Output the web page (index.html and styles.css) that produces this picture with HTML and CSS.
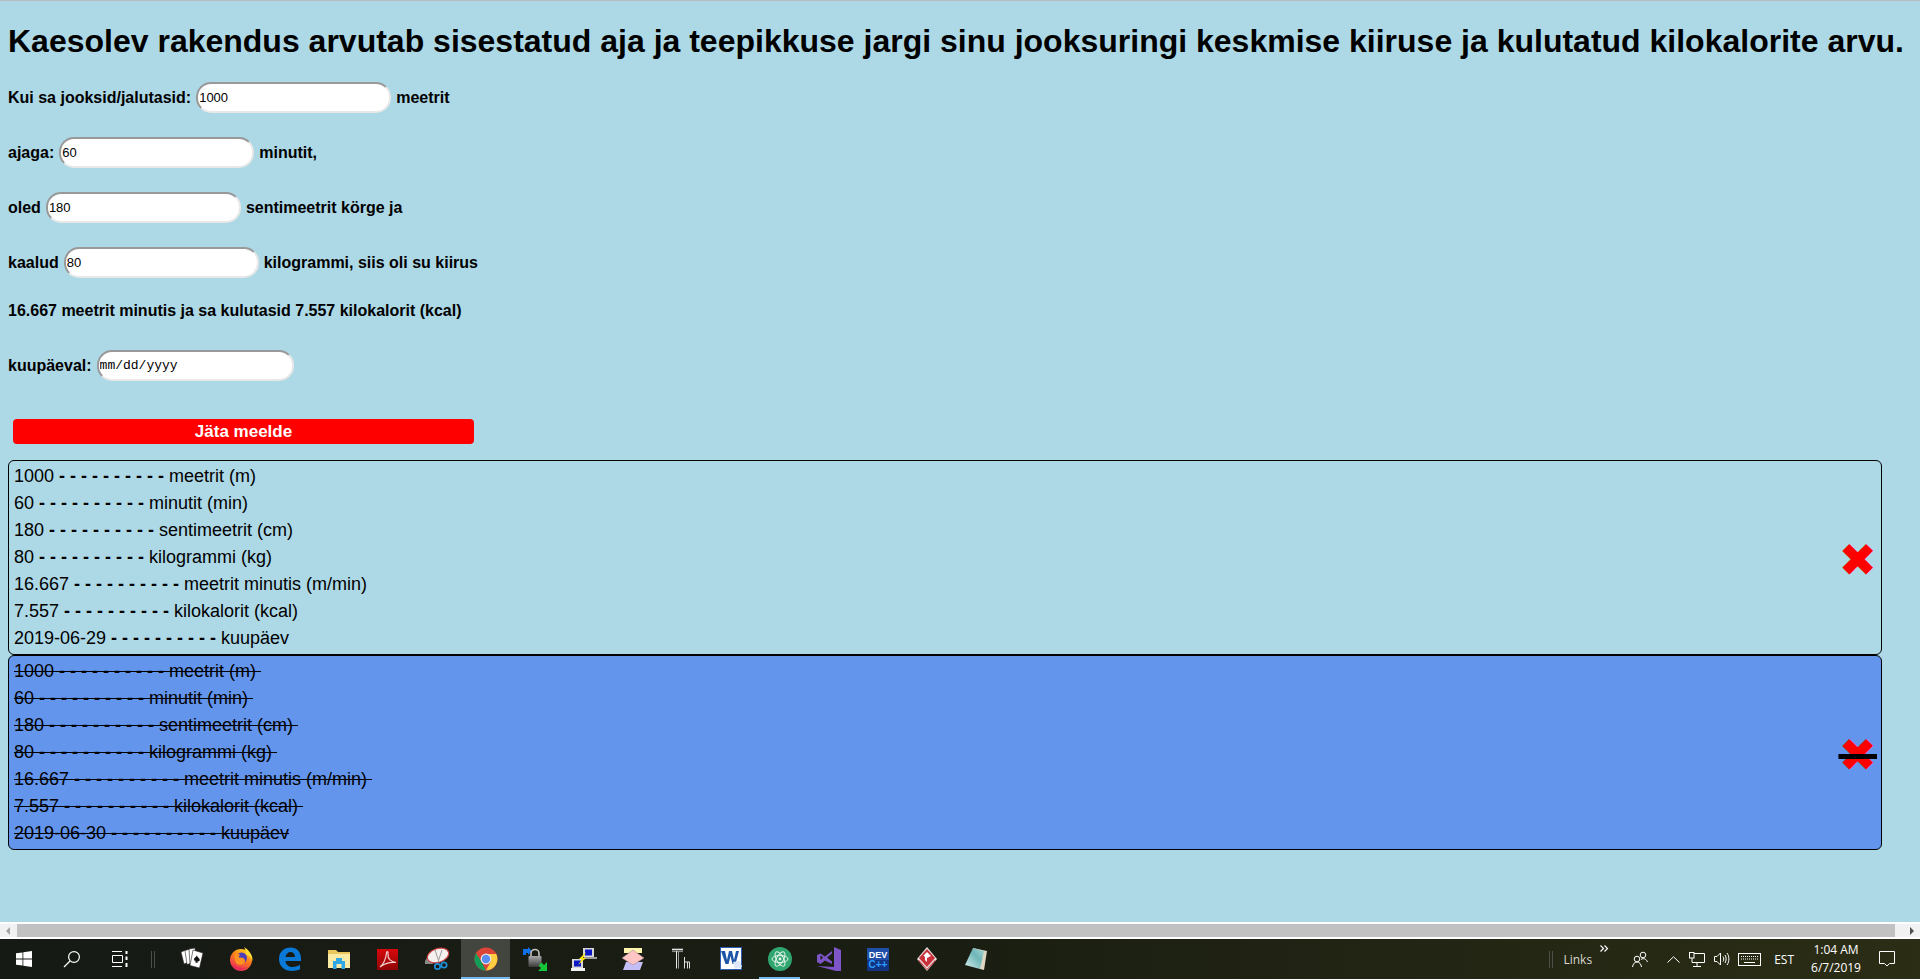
FILE: index.html
```html
<!DOCTYPE html>
<html lang="en">
<head>
    <meta charset="UTF-8">
    <meta name="viewport" content="width=device-width, initial-scale=1.0">
    <title>Jooksuringi kalkulaator</title>
    <link rel="stylesheet" href="styles.css">
</head>
<body>
    <div class="screen">
        <main class="page">
            <h1>Kaesolev rakendus arvutab sisestatud aja ja teepikkuse jargi sinu jooksuringi keskmise kiiruse ja kulutatud kilokalorite arvu.</h1>

            <form class="calc">
                <div class="row"><label for="distance">Kui sa jooksid/jalutasid:</label> <input type="text" id="distance" value="1000"> meetrit</div>
                <div class="row"><label for="time">ajaga:</label> <input type="text" id="time" value="60"> minutit,</div>
                <div class="row"><label for="height">oled</label> <input type="text" id="height" value="180"> sentimeetrit körge ja</div>
                <div class="row"><label for="weight">kaalud</label> <input type="text" id="weight" value="80"> kilogrammi, siis oli su kiirus</div>
                <p class="result">16.667 meetrit minutis ja sa kulutasid 7.557 kilokalorit (kcal)</p>
                <div class="row"><label for="date">kuupäeval:</label> <input type="text" id="date" class="date-input" placeholder="mm/dd/yyyy"></div>
                <button type="button" class="save">Jäta meelde</button>
            </form>

            <div class="entry">
                <ul>
                    <li>1000 <b>- - - - - - - - - -</b> meetrit (m)</li>
                    <li>60 <b>- - - - - - - - - -</b> minutit (min)</li>
                    <li>180 <b>- - - - - - - - - -</b> sentimeetrit (cm)</li>
                    <li>80 <b>- - - - - - - - - -</b> kilogrammi (kg)</li>
                    <li>16.667 <b>- - - - - - - - - -</b> meetrit minutis (m/min)</li>
                    <li>7.557 <b>- - - - - - - - - -</b> kilokalorit (kcal)</li>
                    <li>2019-06-29 <b>- - - - - - - - - -</b> kuupäev</li>
                </ul>
                <span class="remove">✖</span>
            </div>

            <div class="entry done">
                <ul>
                    <li>1000 <b>- - - - - - - - - -</b> meetrit (m)&nbsp;</li>
                    <li>60 <b>- - - - - - - - - -</b> minutit (min)&nbsp;</li>
                    <li>180 <b>- - - - - - - - - -</b> sentimeetrit (cm)&nbsp;</li>
                    <li>80 <b>- - - - - - - - - -</b> kilogrammi (kg)&nbsp;</li>
                    <li>16.667 <b>- - - - - - - - - -</b> meetrit minutis (m/min)&nbsp;</li>
                    <li>7.557 <b>- - - - - - - - - -</b> kilokalorit (kcal)&nbsp;</li>
                    <li>2019-06-30 <b>- - - - - - - - - -</b> kuupäev</li>
                </ul>
                <span class="remove">✖</span>
            </div>
        </main>

        <div class="hscroll">
            <span class="arrow arrow-left"></span>
            <span class="thumb"></span>
            <span class="arrow arrow-right"></span>
        </div>

        <footer class="taskbar">
            <div class="slot narrow">
                <svg width="16" height="16" viewBox="0 0 16 16"><path fill="#fff" d="M0 2.300 6.500 1.400V7.600H0ZM7.300 1.300 16 0V7.600H7.300ZM0 8.400H6.500V14.600L0 13.700ZM7.300 8.400H16V16L7.300 14.700Z"/></svg>
            </div>
            <div class="slot narrow">
                <svg width="18" height="18" viewBox="0 0 18 18" fill="none" stroke="#fff" stroke-width="1.200"><circle cx="11" cy="7" r="5.400"/><path d="M7 11 1 17"/></svg>
            </div>
            <div class="slot narrow">
                <svg width="16" height="16" viewBox="0 0 16 16" fill="none" stroke="#fff"><path d="M0 .5H10M.5 4.500H10.500V11.500H.5ZM0 15.500H10"/><path stroke-width="2" d="M14.500 0V3M14.500 5.500V9M14.500 12V16"/></svg>
            </div>
            <div class="grip"></div>

            <!-- cards -->
            <div class="slot">
                <svg width="24" height="24" viewBox="0 0 24 24"><path fill="#fff" stroke="#222" stroke-width=".6" d="M1 5 6 3 9 15 4 17Z"/><path fill="#fff" stroke="#222" stroke-width=".6" d="M5 3.500 10 2 12 16 7 17.500Z"/><path fill="#fff" stroke="#222" stroke-width=".6" d="M9 2 15 1 16 17 10 18Z"/><path fill="#fff" stroke="#222" stroke-width=".6" d="M13 3 23 6 19.500 21 10 18.500Z"/><path fill="#111" d="M16.800 8.500C18 11 20.500 11.500 19.500 13.800 18.900 14.800 17.800 14.500 17.400 14L17.700 16 15 15.300 16 13.800C15.300 14.200 14 13.800 14 12.500 14 10.500 16 10.500 16.800 8.500Z"/></svg>
            </div>
            <!-- firefox -->
            <div class="slot">
                <svg width="24" height="24" viewBox="0 0 24 24"><defs><linearGradient id="ff" x1=".8" y1="0" x2=".3" y2="1"><stop offset="0" stop-color="#ffd21e"/><stop offset=".45" stop-color="#ff7b1c"/><stop offset="1" stop-color="#e3265e"/></linearGradient></defs><circle cx="12" cy="13" r="11" fill="url(#ff)"/><path fill="#ffd92e" d="M15 0C20 3 24 8 23.500 14 22 10 19 8 16 7 17.500 5 16.500 2.500 15 0Z"/><circle cx="12.500" cy="11" r="5.500" fill="#4b3fb8"/><path fill="#ff9322" d="M6 7C8 6 10 6.500 11 8 10 9 9 9.500 10 10.500 13 10 16 11 16 14 16 17 12 18.500 9 17.500 6 16.500 5 11 6 7Z"/><path fill="#e8265c" d="M3 18C6 22 13 24 19 20 14 22 8 21 3 18Z"/></svg>
            </div>
            <!-- edge -->
            <div class="slot">
                <svg width="24" height="24" viewBox="0 0 24 24"><path fill="#0a78d7" d="M1 12C1 5 6 .5 12.500 .5 19 .5 23 5 23 11.500V14H7.500C8 18 11 20 14.500 20 17 20 19.500 19.300 22 17.800V22.300C19.500 23.500 17 24 14 24 6.500 24 1 19.500 1 12ZM7.500 10H17C17 7 15.300 5 12.500 5 10 5 8 7 7.500 10Z"/></svg>
            </div>
            <!-- explorer -->
            <div class="slot">
                <svg width="22" height="20" viewBox="0 0 22 20"><path fill="#e9c75c" d="M0 1H8L10 3H22V19H0Z"/><path fill="#fbeaa6" d="M0 5H22V19H0Z"/><path fill="#2fa6e6" d="M5 20V12H8V9H14V12H17V20H13.500V15H8.500V20Z"/></svg>
            </div>
            <!-- acrobat -->
            <div class="slot">
                <svg width="21" height="21" viewBox="0 0 21 21"><defs><linearGradient id="acro" x1="0" y1="0" x2="0" y2="1"><stop offset="0" stop-color="#d8080c"/><stop offset="1" stop-color="#8e0505"/></linearGradient></defs><rect width="21" height="21" fill="url(#acro)"/><path fill="none" stroke="#f0cfcf" stroke-width="1.200" d="M3 18C6 16 9 10 9.500 4 9.500 2 11.500 2 11 5 10.500 10 14 13 19 13.500 15 13 8 14 3 18Z"/></svg>
            </div>
            <!-- snipping tool -->
            <div class="slot">
                <svg width="26" height="24" viewBox="0 0 26 24"><path fill="#8a8a88" d="M1 17C0 13 4 9 7 9L9 17Z"/><ellipse cx="14" cy="8.500" rx="11" ry="6.800" fill="#f6f1f1" stroke="#d04545" stroke-width="1.200" transform="rotate(-18 14 8.500)"/><path d="M11 3 15 15M18 3 14 15" stroke="#9a9a9a" fill="none"/><circle cx="13.500" cy="19.500" r="2.700" fill="none" stroke="#1e8fd8" stroke-width="1.700"/><circle cx="20" cy="18" r="2.700" fill="none" stroke="#1e8fd8" stroke-width="1.700"/></svg>
            </div>
            <!-- chrome -->
            <div class="slot active">
                <svg width="24" height="24" viewBox="0 0 24 24"><circle cx="12" cy="12" r="11.500" fill="#db4437"/><path fill="#0f9d58" d="M12 23.500A11.500 11.500 0 0 1 2 6.300L7.500 15 12 23.500Z"/><path fill="#ffcd40" d="M12 7H22.300A11.500 11.500 0 0 1 12 23.500L17 14Z"/><circle cx="12" cy="12" r="5.400" fill="#e8e8e8"/><circle cx="12" cy="12" r="4.200" fill="#5a8df0"/></svg>
            </div>
            <!-- vpn lock -->
            <div class="slot">
                <svg width="24" height="24" viewBox="0 0 24 24"><defs><linearGradient id="lock" x1="0" y1="0" x2="0" y2="1"><stop offset="0" stop-color="#a8a8a8"/><stop offset="1" stop-color="#3a3a3a"/></linearGradient></defs><path fill="#1170e8" d="M0 2H5V0L9 4 5 8V6H3V8H0Z"/><path fill="none" stroke="#c4c4c4" stroke-width="1.600" d="M8 10V6.500A4 4 0 0 1 16 6.500V10"/><rect x="5.500" y="9" width="13" height="11" rx="1" fill="url(#lock)"/><path fill="#17c53a" d="M24 15V24H15L18 21 15.500 18.500 18.500 15.500 21 18Z"/></svg>
            </div>
            <!-- putty -->
            <div class="slot">
                <svg width="26" height="25" viewBox="0 0 26 25"><rect x="12" y="1" width="11" height="9" fill="#d8d8d8"/><rect x="14" y="2.500" width="7" height="6" fill="#0b18c8"/><rect x="13" y="10" width="13" height="2" fill="#9a9a9a"/><rect x="1" y="12" width="11" height="9" fill="#d8d8d8"/><rect x="3" y="13.500" width="7" height="6" fill="#0b18c8"/><rect x="0" y="21" width="14" height="3" fill="#f0f0f0"/><path fill="#ffe600" d="M15 5 8 12H11L7 18 15 11H12Z"/></svg>
            </div>
            <!-- layers -->
            <div class="slot">
                <svg width="24" height="24" viewBox="0 0 24 24"><rect x="3" y="1" width="18" height="5" fill="#fdf4b0"/><path fill="#c5bdf5" d="M5 15H22L19 23H2Z"/><path fill="#ffc4c4" stroke="#a08080" stroke-width=".5" d="M12 3 23 11 12 18 1 11Z"/></svg>
            </div>
            <!-- font tool -->
            <div class="slot">
                <svg width="20" height="22" viewBox="0 0 20 22" fill="none"><path stroke="#e8e8e8" stroke-width="1.600" d="M0 1.500H11"/><path stroke="#888" stroke-width="1.200" d="M0 3.500H11"/><path stroke="#e8e8e8" d="M4.500 3V20.500"/><path stroke="#999" d="M6.500 3V20.500"/><path stroke="#ddd" d="M12.500 9V20.500M12.500 14H17.500V20.500M15.500 14V20.500"/></svg>
            </div>
            <!-- word -->
            <div class="slot">
                <svg width="22" height="24" viewBox="0 0 22 24"><rect x=".5" y=".5" width="21" height="22" fill="#fff" stroke="#2b5cb0"/><path fill="#1d56a8" d="M1 4H5L7 13 9 4H12L14 13 16 4H19L15.500 17H12.500L10.500 9 8.500 17H5.500Z"/><path fill="#dfe8f6" d="M13 15 20 14 22 20 15 22Z"/></svg>
            </div>
            <!-- atom -->
            <div class="slot running">
                <svg width="24" height="24" viewBox="0 0 24 24"><circle cx="12" cy="12" r="12" fill="#2fa56f"/><g fill="none" stroke="#e6f4ec" stroke-width="1"><ellipse cx="12" cy="12" rx="8" ry="3.500"/><ellipse cx="12" cy="12" rx="8" ry="3.500" transform="rotate(60 12 12)"/><ellipse cx="12" cy="12" rx="8" ry="3.500" transform="rotate(120 12 12)"/></g><circle cx="12" cy="12" r="1.400" fill="#e6f4ec"/></svg>
            </div>
            <!-- visual studio -->
            <div class="slot">
                <svg width="24" height="24" viewBox="0 0 24 24"><path fill="#7d55c7" d="M24 3V24L19 24 0 19 17 20V0ZM15 4 8 9.500 3.500 6.500 0 8V15L3.500 17 8 13.500 15 17ZM15 6.500V14.500L10 10.500ZM3.500 8.500 6 10.500 3.500 13Z" fill-rule="evenodd"/></svg>
            </div>
            <!-- dev c++ -->
            <div class="slot">
                <svg width="22" height="23" viewBox="0 0 22 23"><rect width="22" height="23" fill="#1f4fa8"/><rect y="12" width="22" height="11" fill="#123480"/><text x="11" y="10" text-anchor="middle" class="dev-text">DEV</text><text x="11" y="20" text-anchor="middle" class="cpp-text">C++</text></svg>
            </div>
            <!-- rocket -->
            <div class="slot">
                <svg width="20" height="24" viewBox="0 0 20 24"><path fill="#e8e0e0" d="M10 0 20 12 10 24 0 12Z"/><path fill="#c8303a" d="M10 2 18 11 10 20 2 11Z"/><path fill="#c8303a" d="M2 13 10 22 18 13 18.500 14 10 23 1.500 14Z"/><path fill="#fff" d="M10 5 14 9 10 11V15L8 13V10L6.500 8.500Z"/></svg>
            </div>
            <!-- notepad -->
            <div class="slot">
                <svg width="22" height="23" viewBox="0 0 22 23"><defs><linearGradient id="pad" x1="0" y1="1" x2="1" y2="0"><stop offset="0" stop-color="#d8f0ee"/><stop offset=".6" stop-color="#6fb6b8"/><stop offset="1" stop-color="#a8d4d4"/></linearGradient></defs><path fill="#dcd6c2" d="M8 0 22 3 19 22 15 21Z"/><path fill="url(#pad)" d="M8 0 19 3 15 21 0 17Z"/></svg>
            </div>

            <div class="tray">
                <div class="grip"></div>
                <span class="links">Links</span>
                <svg class="more" width="9" height="7" viewBox="0 0 9 7" fill="none" stroke="#fff" stroke-width="1.200"><path d="M.5 .5 3.500 3.500 .5 6.500M4.500 .5 7.500 3.500 4.500 6.500"/></svg>
                <svg class="people" width="16" height="17" viewBox="0 0 16 17" fill="none" stroke="#fff"><circle cx="11" cy="4" r="2.800"/><circle cx="5" cy="8" r="2.800"/><path d="M.5 16C1 13 2.500 11 5 11S9 13 9.500 16M9 8.500C10 7.500 12 7.300 13.500 8.300 14.500 9 15 10 15.500 11"/></svg>
                <svg class="caret" width="13" height="7" viewBox="0 0 13 7" fill="none" stroke="#fff"><path d="M.5 6.500 6.500 .8 12.500 6.500"/></svg>
                <svg class="net" width="16" height="15" viewBox="0 0 16 15" fill="none" stroke="#fff"><path d="M5 1.500H15.500V10.500H3M8 10.500V14M4 14.500H12"/><rect x=".5" y=".5" width="4.500" height="5.500"/><path d="M3 6V10.500"/></svg>
                <svg class="vol" width="16" height="14" viewBox="0 0 16 14" fill="none" stroke="#fff"><path d="M.5 4.500H3L6.500 1V13L3 9.500H.5Z"/><path d="M9 4.500C10 6 10 8 9 9.500M11 3C12.500 5.500 12.500 8.500 11 11M13 1C15.500 4.500 15.500 9.500 13 13"/></svg>
                <svg class="keys" width="23" height="13" viewBox="0 0 23 13" fill="none" stroke="#fff"><rect x=".5" y=".5" width="22" height="12"/><path stroke-dasharray="1 1" d="M3 3.500H20M3 6H20"/><path d="M6 9.500H17"/></svg>
                <span class="lang">EST</span>
                <div class="clock"><span>1:04 AM</span><span>6/7/2019</span></div>
                <svg class="notify" width="16" height="16" viewBox="0 0 16 16" fill="none" stroke="#fff"><path d="M.5 .5H15.500V12.500H10.500L8 15 5.500 12.500H.5Z"/></svg>
            </div>
        </footer>
    </div>
</body>
</html>
```

FILE: styles.css
```css
/* Page */
html, body {
    margin: 0;
    padding: 0;
    height: 100%;
    overflow: hidden;
}

body {
    font-family: "Liberation Sans", Arial, sans-serif;
    background-color: lightblue;
    color: #000;
}

.screen {
    height: 979px;
    display: flex;
    flex-direction: column;
    border-top: 1px solid #b8bcc0;
    box-sizing: border-box;
}

.page {
    flex: 1;
    min-height: 0;
    padding: 0 38px 0 8px;
}

h1 {
    margin: 22px 0;
    font-size: 32px;
    line-height: 37px;
    white-space: nowrap;
}

/* Calculator form */
.calc {
    font-size: 16px;
    font-weight: bold;
}

.row {
    height: 31px;
    margin-bottom: 24px;
    display: flex;
    align-items: center;
    gap: 5px;
    white-space: nowrap;
}

.row input {
    width: 195px;
    height: 31px;
    box-sizing: border-box;
    padding: 1px;
    border: 2px solid #e8e8e8;
    border-top-color: #999;
    border-left-color: #999;
    border-radius: 15px;
    background: #fff;
    font-family: "Liberation Sans", Arial, sans-serif;
    font-size: 13px;
    outline: none;
}

.row .date-input {
    width: 197px;
    font-family: "Liberation Mono", monospace;
    font-size: 13px;
}

.date-input::placeholder {
    color: #000;
    opacity: 1;
}

.result {
    margin: 0 0 30px;
    line-height: 18px;
}

.save {
    display: block;
    width: 461px;
    height: 25px;
    margin: 38px 0 16px 5px;
    padding: 0;
    border: none;
    border-radius: 4px;
    background-color: red;
    color: #fff;
    font-family: inherit;
    font-size: 17px;
    font-weight: bold;
}

/* Saved entries */
.entry {
    display: flex;
    align-items: center;
    justify-content: space-between;
    height: 195px;
    box-sizing: border-box;
    border: 1px solid #000;
    border-radius: 6px;
    padding: 0 4px 0 5px;
}

.entry ul {
    margin: 0;
    padding: 0;
    list-style: none;
    font-size: 18px;
    line-height: 27px;
}

.entry b {
    font-weight: bold;
}

.remove {
    margin-top: 4px;
    font-family: "DejaVu Sans", sans-serif;
    font-size: 46px;
    line-height: 46px;
    color: red;
}

.done {
    background-color: cornflowerblue;
}

.done li,
.done .remove {
    text-decoration: line-through;
    text-decoration-color: #000;
}

.done .remove {
    text-decoration-thickness: 5px;
}

/* Scrollbar along the bottom */
.hscroll {
    height: 17px;
    flex-shrink: 0;
    display: flex;
    align-items: center;
    background: #f1f1f1;
    border-top: 2px solid #fff;
    border-bottom: 2px solid #fff;
    box-sizing: border-box;
}

.arrow {
    width: 0;
    height: 0;
    border-top: 4px solid transparent;
    border-bottom: 4px solid transparent;
}

.arrow-left {
    margin: 0 7px 0 6px;
    border-right: 4px solid #a3a3a3;
}

.arrow-right {
    margin: 0 6px 0 15px;
    border-left: 4px solid #505050;
}

.thumb {
    flex: 1;
    height: 13px;
    background: #c1c1c1;
}

/* Windows taskbar */
.taskbar {
    height: 40px;
    flex-shrink: 0;
    display: flex;
    align-items: center;
    background: linear-gradient(to right, #161a15, #1a1e12 50%, #2b2d15);
    color: #fff;
    font-family: "Open Sans", sans-serif;
    font-size: 12px;
}

.slot {
    width: 49px;
    height: 40px;
    flex-shrink: 0;
    display: flex;
    align-items: center;
    justify-content: center;
    box-sizing: border-box;
}

.slot.narrow {
    width: 48px;
}

.slot.active {
    background: #43463f;
    border-bottom: 2px solid #76b9ed;
    padding-top: 2px;
}

.slot.running {
    position: relative;
}

.slot.running::after {
    content: "";
    position: absolute;
    left: 4px;
    right: 4px;
    bottom: 0;
    height: 2px;
    background: #76b9ed;
}

.grip {
    width: 4px;
    height: 17px;
    margin: 0 12px 0 7px;
    flex-shrink: 0;
    box-sizing: border-box;
    border-left: 1px solid #4c4e47;
    border-right: 1px solid #4c4e47;
}

.tray .grip {
    margin: 0 10px 0 0;
}

.dev-text {
    font-family: "Liberation Sans", sans-serif;
    font-size: 9px;
    font-weight: bold;
    fill: #fff;
}

.cpp-text {
    font-family: "Liberation Sans", sans-serif;
    font-size: 10px;
    font-weight: bold;
    fill: #2b9dff;
}

/* System tray */
.tray {
    margin-left: auto;
    display: flex;
    align-items: center;
    height: 40px;
}

.links {
    color: #d8d8d0;
}

.more {
    align-self: flex-start;
    margin: 6px 0 0 8px;
}

.people {
    margin-left: 23px;
}

.caret {
    margin-left: 19px;
}

.net {
    margin-left: 9px;
}

.vol {
    margin-left: 9px;
}

.keys {
    margin-left: 8px;
}

.lang {
    margin-left: 13px;
}

.clock {
    display: flex;
    flex-direction: column;
    align-items: center;
    width: 66px;
    margin-left: 9px;
    line-height: 18px;
}

.notify {
    margin: 0 25px 0 10px;
}
```
